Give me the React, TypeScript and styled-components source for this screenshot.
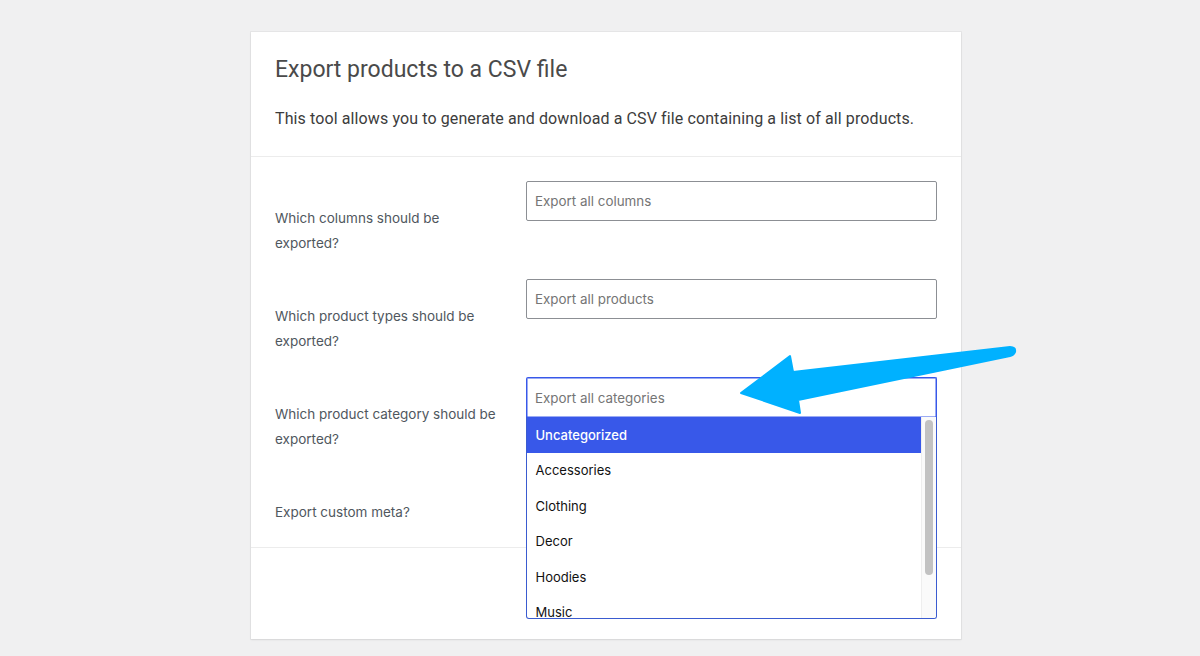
import React from "react";
import styled, { createGlobalStyle } from "styled-components";

const Global = createGlobalStyle`
  html, body { margin: 0; padding: 0; background: #f0f0f1; }
  body { font-family: Inter, "Noto Sans", sans-serif; width: 1200px; height: 656px; overflow: hidden; }
`;

const Page = styled.div`
  position: relative;
  width: 1200px;
  height: 656px;
  padding: 32px 0 0 251px;
  box-sizing: border-box;
`;

const Card = styled.div`
  width: 710px;
  height: 607px;
  background: #fff;
  box-shadow: 0 0 0 1px rgba(0, 0, 0, 0.04), 0 1px 2px rgba(0, 0, 0, 0.08);
  display: flex;
  flex-direction: column;
`;

const Header = styled.div`
  padding: 24px 24px 0 24px;
  height: 125px;
  box-sizing: border-box;
  border-bottom: 1px solid #ececec;
`;

const Title = styled.h2`
  margin: 0;
  font-family: Roboto, "Liberation Sans", sans-serif;
  font-weight: 400;
  font-size: 23px;
  line-height: 28px;
  color: #4a4a4a;
`;

const Desc = styled.p`
  margin: 23px 0 0 0;
  font-family: Roboto, "Liberation Sans", sans-serif;
  font-size: 16px;
  line-height: 24px;
  color: #3c3c3c;
  letter-spacing: 0.11px;
`;

const Form = styled.div`
  display: flex;
  flex-direction: column;
  border-bottom: 1px solid #ececec;
`;

const Row = styled.div<{ $h: number }>`
  position: relative;
  display: grid;
  grid-template-columns: 251px 411px;
  padding-left: 24px;
  height: ${(p) => p.$h}px;
  box-sizing: border-box;
`;

const Label = styled.div`
  padding-top: 49px;
  font-size: 13.5px;
  line-height: 24.5px;
  color: #50575e;
  width: 230px;
`;

const Field = styled.div<{ $focus?: boolean }>`
  margin-top: 24px;
  height: 40px;
  box-sizing: border-box;
  border: 1px solid ${(p) => (p.$focus ? "#3858e9" : "#8c8f94")};
  box-shadow: ${(p) => (p.$focus ? "inset 0 0 0 0.5px #3858e9" : "none")};
  border-radius: 2px;
  ${(p) => (p.$focus ? "border-bottom-left-radius:0;border-bottom-right-radius:0;border-bottom:none;" : "")}
  padding: 0 8px;
  display: flex;
  align-items: center;
  font-size: 13.4px;
  color: #757575;
`;

const Footer = styled.div`
  flex: 1;
`;

const Dropdown = styled.div`
  position: absolute;
  left: 275px;
  top: 64px;
  width: 411px;
  height: 202px;
  box-sizing: border-box;
  border: 1.5px solid #3a5bd0;
  border-top: none;
  border-radius: 0 0 3px 3px;
  background: #fff;
  display: flex;
  overflow: hidden;
  z-index: 2;
`;

const Options = styled.div`
  flex: 1;
  display: flex;
  flex-direction: column;
`;

const Option = styled.div<{ $active?: boolean }>`
  height: 35.5px;
  flex: none;
  display: flex;
  align-items: center;
  padding-left: 8.5px;
  font-size: 13px;
  color: ${(p) => (p.$active ? "#fff" : "#111")};
  background: ${(p) => (p.$active ? "#3858e9" : "transparent")};
  font-weight: ${(p) => (p.$active ? 500 : 400)};
`;

const Track = styled.div`
  width: 15px;
  flex: none;
  background: #fafafa;
  border-left: 1px solid #eeeeee;
  padding: 3px 0 0 3px;
  box-sizing: border-box;
`;

const Thumb = styled.div`
  width: 8px;
  height: 155px;
  border-radius: 4px;
  background: #c2c2c2;
`;

const Arrow = styled.svg`
  position: absolute;
  left: 0;
  top: 0;
  z-index: 3;
  pointer-events: none;
`;

const rows = [
  { label: "Which columns should be exported?", value: "Export all columns" },
  { label: "Which product types should be exported?", value: "Export all products" },
  { label: "Which product category should be exported?", value: "Export all categories", focus: true },
];

const cats = ["Uncategorized", "Accessories", "Clothing", "Decor", "Hoodies", "Music"];

export default function App() {
  return (
    <>
      <Global />
      <Page>
        <Card>
          <Header>
            <Title>Export products to a CSV file</Title>
            <Desc>This tool allows you to generate and download a CSV file containing a list of all products.</Desc>
          </Header>
          <Form>
            {rows.map((r) => (
              <Row key={r.label} $h={98}>
                <Label>{r.label}</Label>
                <Field $focus={r.focus}>{r.value}</Field>
                {r.focus && (
                  <Dropdown>
                    <Options>
                      {cats.map((c, i) => (
                        <Option key={c} $active={i === 0}>
                          {c}
                        </Option>
                      ))}
                    </Options>
                    <Track>
                      <Thumb />
                    </Track>
                  </Dropdown>
                )}
              </Row>
            ))}
            <Row $h={96}>
              <Label>Export custom meta?</Label>
            </Row>
          </Form>
          <Footer />
        </Card>
        <Arrow width="1200" height="656" viewBox="0 0 1200 656">
          <path
            d="M741 393 L790 356 L793 372 L1010 347 Q1016 347 1015 352 Q1014 355 1010 356 L798 400 L800 413 Z"
            fill="#00b1ff"
            stroke="#00b1ff"
            strokeWidth="2"
            strokeLinejoin="round"
          />
        </Arrow>
      </Page>
    </>
  );
}
